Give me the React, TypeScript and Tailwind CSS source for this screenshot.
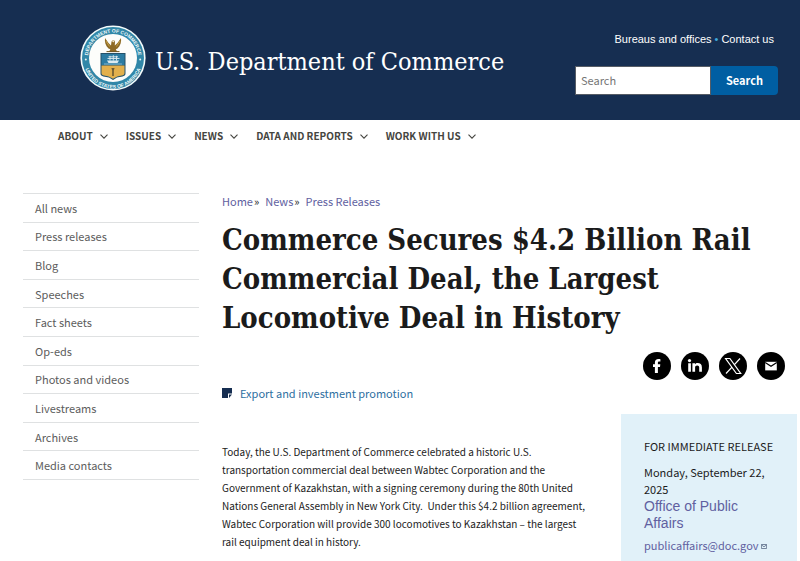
import type { ReactNode } from 'react'

const navItems = ['About', 'Issues', 'News', 'Data and reports', 'Work with us']

const sideLinks = [
  'All news',
  'Press releases',
  'Blog',
  'Speeches',
  'Fact sheets',
  'Op-eds',
  'Photos and videos',
  'Livestreams',
  'Archives',
  'Media contacts',
]

function Seal() {
  return (
    <svg viewBox="0 0 66 66" className="h-[66px] w-[66px] shrink-0" role="img" aria-label="Department of Commerce seal">
      <defs>
        <path id="seal-top" d="M8.3 36.5 A25 25 0 1 1 57.7 36.5" />
        <path id="seal-bottom" d="M3.6 34 A29.4 29.4 0 0 0 62.4 34" />
      </defs>
      <circle cx="33" cy="33" r="32.6" fill="#f4fbfb" />
      <circle cx="33" cy="33" r="31" fill="#3187a8" />
      <circle cx="33" cy="33" r="24" fill="#fdfdfb" />
      <g fill="#eef8f8" fontFamily="'Liberation Sans', sans-serif" fontWeight="700" fontSize="5">
        <text textAnchor="middle">
          <textPath href="#seal-top" startOffset="50%">DEPARTMENT OF COMMERCE</textPath>
        </text>
        <text textAnchor="middle">
          <textPath href="#seal-bottom" startOffset="50%">UNITED STATES OF AMERICA</textPath>
        </text>
      </g>
      <circle cx="5.8" cy="34.5" r="1" fill="#e8f4f4" />
      <circle cx="60.2" cy="34.5" r="1" fill="#e8f4f4" />
      {/* eagle */}
      <path
        d="M25 13 L28.5 18 L31 20.5 L31.5 16.5 L33 15 L35 16 L34.8 20.5 L37.5 18 L41 13 C41.5 17 40.5 21 37.5 23.5 L35.8 24.2 L37.2 26.8 H29 L30.4 24.2 L28.5 23.5 C25.5 21 24.5 17 25 13 Z"
        fill="#8d6a26"
      />
      <path d="M26 16 L29.5 21.5 M40 16 L36.5 21.5" stroke="#d2ad50" strokeWidth="0.8" />
      <path d="M32 16 L33.2 15.2 L34.6 16.2 L33.2 17.4 Z" fill="#f3ead0" />
      <path d="M26.5 26.6 H39.5" stroke="#6e5420" strokeWidth="1" />
      {/* shield */}
      <path d="M20.5 28 H45.5 V48.5 C45.5 52 40.5 51.5 37 52.6 L33 55 L29 52.6 C25.5 51.5 20.5 52 20.5 48.5 Z" fill="#24526b" />
      <path d="M21.5 29 H44.5 V40 H21.5 Z" fill="#2c7ca3" />
      <path d="M21.5 40.5 H44.5 V48.3 C44.5 51 40 50.5 36.8 51.7 L33 53.8 L29.2 51.7 C26 50.5 21.5 51 21.5 48.3 Z" fill="#e3b04c" />
      <path d="M27 35.6 H39 L37.5 38 H28.5 Z" fill="#dcebf0" />
      <path d="M30 30.8 V35.6 M33.3 30.2 V35.6 M36.5 30.8 V35.6 M27.5 33.5 L39.5 33.5 M28.5 31.8 H38" stroke="#dcebf0" strokeWidth="0.9" />
      <path d="M24 39 H42" stroke="#a9cfdc" strokeWidth="0.7" />
      <path d="M32.2 51 V45.5 L31.4 43 H34.6 L33.8 45.5 V51 Z" fill="#6c5a31" />
    </svg>
  )
}

function Chevron() {
  return (
    <svg viewBox="0 0 8 5" className="mt-px h-[5px] w-2" fill="none" stroke="#454540" strokeWidth="1.1" aria-hidden="true">
      <path d="M0.5 0.6 L4 4.2 L7.5 0.6" />
    </svg>
  )
}

function ShareLink({ label, children }: { label: string; children: ReactNode }) {
  return (
    <a href="#" aria-label={label} className="block h-7 w-7">
      <svg viewBox="0 0 28 28" className="h-7 w-7" aria-hidden="true">
        <circle cx="14" cy="14" r="14" fill="#000" />
        {children}
      </svg>
    </a>
  )
}

export default function App() {
  return (
    <div className="min-h-screen bg-white font-['Noto_Sans_CJK_SC',sans-serif] text-[#1b1b1b]">
      <header className="flex h-[120px] items-start justify-between bg-[#162e51] pr-[22px] pl-20">
        <a href="#" className="flex items-center gap-[9px] pt-[25px] text-white">
          <Seal />
          <span className="pt-2 font-['DejaVu_Serif_Condensed','DejaVu_Serif',serif] text-[25px] leading-8 whitespace-nowrap">
            U.S. Department of Commerce
          </span>
        </a>
        <div className="flex flex-col items-end pt-[31px]">
          <div className="flex gap-[3px] pr-1 font-['Liberation_Sans',sans-serif] text-[11px] leading-4 text-white">
            <a href="#">Bureaus and offices</a>
            <span className="text-[#3fa9dc]">•</span>
            <a href="#">Contact us</a>
          </div>
          <form className="mt-[19px] flex h-[29px]">
            <input
              type="search"
              aria-label="Search"
              placeholder="Search"
              className="w-[136px] border border-[#565c65] bg-white px-[5px] text-[11px] placeholder:text-[#757575]"
            />
            <button type="button" className="w-[67px] rounded-r-sm bg-[#005ea2] text-[11px] font-bold text-white">
              Search
            </button>
          </form>
        </div>
      </header>

      <nav className="flex h-8 items-center gap-[18px] pl-[58px]">
        {navItems.map((item) => (
          <button
            key={item}
            type="button"
            className="flex items-center gap-[7px] text-[10px] leading-4 font-bold whitespace-nowrap text-[#454540] uppercase"
          >
            {item}
            <Chevron />
          </button>
        ))}
      </nav>

      <div className="flex gap-[23px] pt-[41px] pr-[3px] pl-[23px]">
        <aside className="w-44 shrink-0">
          <ul className="grid h-[287px] auto-rows-fr border-t border-[#dfe1e2]">
            {sideLinks.map((link) => (
              <li key={link} className="flex items-center border-b border-[#dfe1e2]">
                <a href="#" className="block px-3 text-[11px] leading-4 text-[#5c5c5c]">
                  {link}
                </a>
              </li>
            ))}
          </ul>
        </aside>

        <main className="min-w-0 flex-1">
          <div className="flex text-[11px] leading-4 text-[#6060a0]">
            <a href="#">Home</a>
            <span className="mr-1.5 ml-px text-[#1b1b1b]">»</span>
            <a href="#">News</a>
            <span className="mr-1.5 ml-px text-[#1b1b1b]">»</span>
            <a href="#">Press Releases</a>
          </div>
          <h1 className="mt-3 font-['DejaVu_Serif_Condensed','DejaVu_Serif',serif] text-[29px] leading-[39px] font-bold">
            Commerce Secures $4.2 Billion Rail Commercial Deal, the Largest Locomotive Deal in History
          </h1>

          <div className="mt-[14px] flex justify-end gap-[10px] pr-3">
            <ShareLink label="Share on Facebook">
              <path d="M11.9 21 V15 H10 V12.2 H11.9 V10.8 C11.9 8.2 13.2 7 15.5 7 C16.3 7 17 7.1 17.4 7.2 V9.6 H16.1 C15.1 9.6 14.9 10.2 14.9 11 V12.2 H17.3 L17 15 H14.9 V21 Z" fill="#fff" />
            </ShareLink>
            <ShareLink label="Share on LinkedIn">
              <path d="M7.2 11.2 H9.9 V19.8 H7.2 Z M11.4 11.2 H14 V12.4 C14.6 11.5 15.4 11 16.7 11 C19.2 11 20.9 12.4 20.9 15.2 V19.8 H18.2 V15.6 C18.2 14.2 17.4 13.4 16.2 13.4 C14.9 13.4 14.1 14.2 14.1 15.6 V19.8 H11.4 Z" fill="#fff" />
              <circle cx="8.5" cy="8.6" r="1.6" fill="#fff" />
            </ShareLink>
            <ShareLink label="Share on X">
              <path d="M6.6 6.5 H10.9 L21.7 21.5 H17.4 Z M21 6.5 L15 13.1 M13 15.2 L7 21.5" fill="none" stroke="#fff" strokeWidth="1.2" />
            </ShareLink>
            <ShareLink label="Share by email">
              <path d="M8.2 9.8 H19.8 V18.4 H8.2 Z" fill="#fff" />
              <path d="M8.2 10.6 L14 14.3 L19.8 10.6" fill="none" stroke="#000" strokeWidth="1.2" />
            </ShareLink>
          </div>

          <div className="flex items-start">
            <div className="min-w-0 flex-1 pt-[3px]">
              <a href="#" className="flex items-center gap-2 text-[11px] leading-5 text-[#2e6f9f]">
                <svg viewBox="0 0 10 10" className="h-[10px] w-[10px]" aria-hidden="true">
                  <path d="M0 0 H10 V5.5 H6 V10 H0 Z" fill="#162e51" />
                  <path d="M7 10 V6.5 H10 Z" fill="#162e51" />
                </svg>
                Export and investment promotion
              </a>
              <p className="mt-10 pr-7 text-[10px] leading-[18px]">
                Today, the U.S. Department of Commerce celebrated a historic U.S. transportation commercial deal between
                Wabtec Corporation and the Government of Kazakhstan, with a signing ceremony during the 80th United
                Nations General Assembly in New York City.&nbsp; Under this $4.2 billion agreement, Wabtec Corporation
                will provide 300 locomotives to Kazakhstan – the largest rail equipment deal in history.
              </p>
            </div>

            <aside className="mt-[34px] w-44 shrink-0 bg-[#e1f1f9] px-[23px] pt-6 pb-6 text-[11px] leading-[17px]">
              <p className="whitespace-nowrap">FOR IMMEDIATE RELEASE</p>
              <p className="mt-[9px]">Monday, September 22, 2025</p>
              <a href="#" className="block font-['Liberation_Sans',sans-serif] text-sm leading-[17px] text-[#6060a0]">
                Office of Public Affairs
              </a>
              <a href="#" className="mt-[5px] flex items-center gap-0.5 text-[#6060a0]">
                publicaffairs@doc.gov
                <svg viewBox="0 0 6 5" className="mt-px h-[5px] w-[6px]" fill="none" stroke="#5a6b86" strokeWidth="0.8" aria-hidden="true">
                  <path d="M0.4 0.5 H5.6 V4.5 H0.4 Z M0.4 0.8 L3 2.8 L5.6 0.8" />
                </svg>
              </a>
            </aside>
          </div>
        </main>
      </div>
    </div>
  )
}
